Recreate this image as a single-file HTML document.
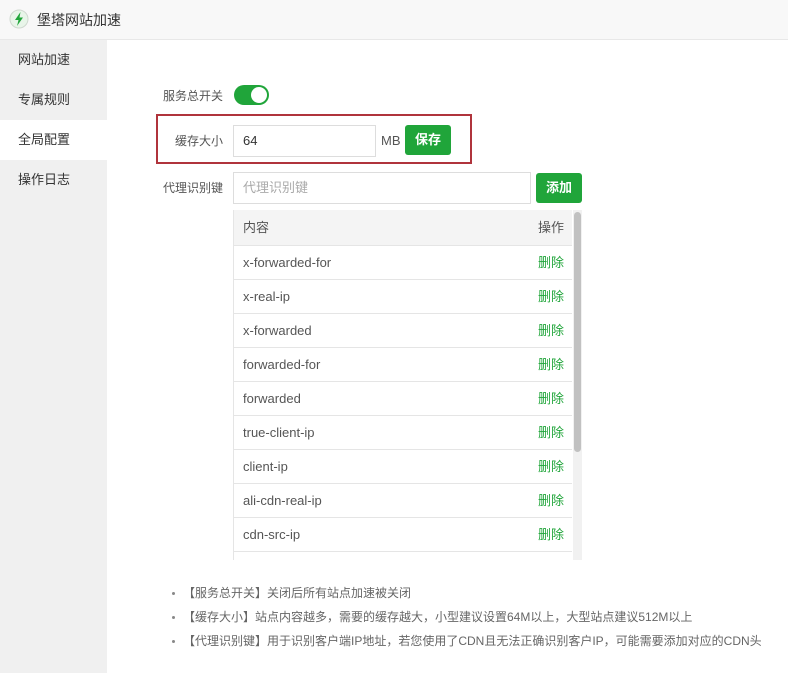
<!DOCTYPE html>
<html><head><meta charset="utf-8"><style>
*{margin:0;padding:0;box-sizing:border-box}
body{width:788px;height:673px;background:#fff;font-family:"Liberation Sans","Noto Sans CJK SC",sans-serif;font-size:13px;color:#333;position:relative;overflow:hidden}
.hdr{position:absolute;left:0;top:0;width:788px;height:40px;background:#f8f8f8;border-bottom:1px solid #e8e8e8}
.hdr span{position:absolute;left:37px;top:10px;font-size:14px;color:#333}
.side{position:absolute;left:0;top:40px;width:107px;height:633px;background:#f0f0f0}
.side div{height:40px;line-height:40px;padding-left:18px;font-size:13px;color:#333}
.side .act{background:#fff}
.abs{position:absolute}
.lbl{position:absolute;font-size:12px;color:#555;text-align:right;width:100px;line-height:16px}
.inp{position:absolute;border:1px solid #ddd;height:32px;line-height:30px;padding-left:9px;font-size:13px;background:#fff}
.btn{position:absolute;background:#20a53a;color:#fff;font-weight:bold;border-radius:3px;text-align:center;font-size:13px}
.tbl{position:absolute;left:233px;top:210px;width:339px;height:350px;overflow:hidden;border-left:1px solid #e5e5e5}
.row{height:34px;line-height:34px;border-bottom:1px solid #e5e5e5;padding-left:9px;position:relative;color:#555}
.row b{position:absolute;right:8px;top:0;font-weight:normal;color:#20a53a}
.th{height:36px;line-height:36px;background:#f4f4f4;color:#555}
.sb{position:absolute;left:573px;top:210px;width:9px;height:350px;background:#f1f1f1}
.sb i{position:absolute;left:1px;top:2px;width:7px;height:240px;background:#c1c1c1;border-radius:4px}
.notes{position:absolute;left:183px;top:583px;font-size:12px;color:#666}
.notes div{height:24px;line-height:20px;position:relative}
.notes div:before{content:"";position:absolute;left:-11px;top:9px;width:3px;height:3px;background:#888;border-radius:50%}
</style></head><body>
<div class="hdr"><svg class="abs" style="left:9px;top:9px" width="20" height="20" viewBox="0 0 20 20"><circle cx="10" cy="10" r="9" fill="#e8f5e9" stroke="#cfd8cf"/><path d="M11.5 3 L6 11 H9.5 L8 17 L14 8.5 H10.5 Z" fill="#20a53a"/></svg><span>堡塔网站加速</span></div>
<div class="side"><div>网站加速</div><div>专属规则</div><div class="act">全局配置</div><div>操作日志</div></div>

<div class="lbl" style="left:123px;top:88px">服务总开关</div>
<div class="abs" style="left:234px;top:85px;width:35px;height:20px;background:#20a53a;border-radius:10px"><div class="abs" style="left:17px;top:2px;width:16px;height:16px;background:#fff;border-radius:50%"></div></div>

<div class="abs" style="left:156px;top:114px;width:316px;height:50px;border:2px solid #b0343c"></div>
<div class="lbl" style="left:123px;top:133px">缓存大小</div>
<div class="inp" style="left:233px;top:125px;width:143px">64</div>
<div class="abs" style="left:381px;top:133px;color:#555">MB</div>
<div class="btn" style="left:405px;top:125px;width:46px;height:30px;line-height:30px">保存</div>

<div class="lbl" style="left:123px;top:180px">代理识别键</div>
<div class="inp" style="left:233px;top:172px;width:298px;color:#aaa">代理识别键</div>
<div class="btn" style="left:536px;top:173px;width:46px;height:30px;line-height:30px">添加</div>

<div class="tbl">
<div class="row th">内容<b style="color:#555">操作</b></div>
<div class="row">x-forwarded-for<b>删除</b></div>
<div class="row">x-real-ip<b>删除</b></div>
<div class="row">x-forwarded<b>删除</b></div>
<div class="row">forwarded-for<b>删除</b></div>
<div class="row">forwarded<b>删除</b></div>
<div class="row">true-client-ip<b>删除</b></div>
<div class="row">client-ip<b>删除</b></div>
<div class="row">ali-cdn-real-ip<b>删除</b></div>
<div class="row">cdn-src-ip<b>删除</b></div>
<div class="row"></div>
</div>
<div class="sb"><i></i></div>

<div class="notes">
<div>【服务总开关】关闭后所有站点加速被关闭</div>
<div>【缓存大小】站点内容越多，需要的缓存越大，小型建议设置64M以上，大型站点建议512M以上</div>
<div>【代理识别键】用于识别客户端IP地址，若您使用了CDN且无法正确识别客户IP，可能需要添加对应的CDN头</div>
</div>
</body></html>
